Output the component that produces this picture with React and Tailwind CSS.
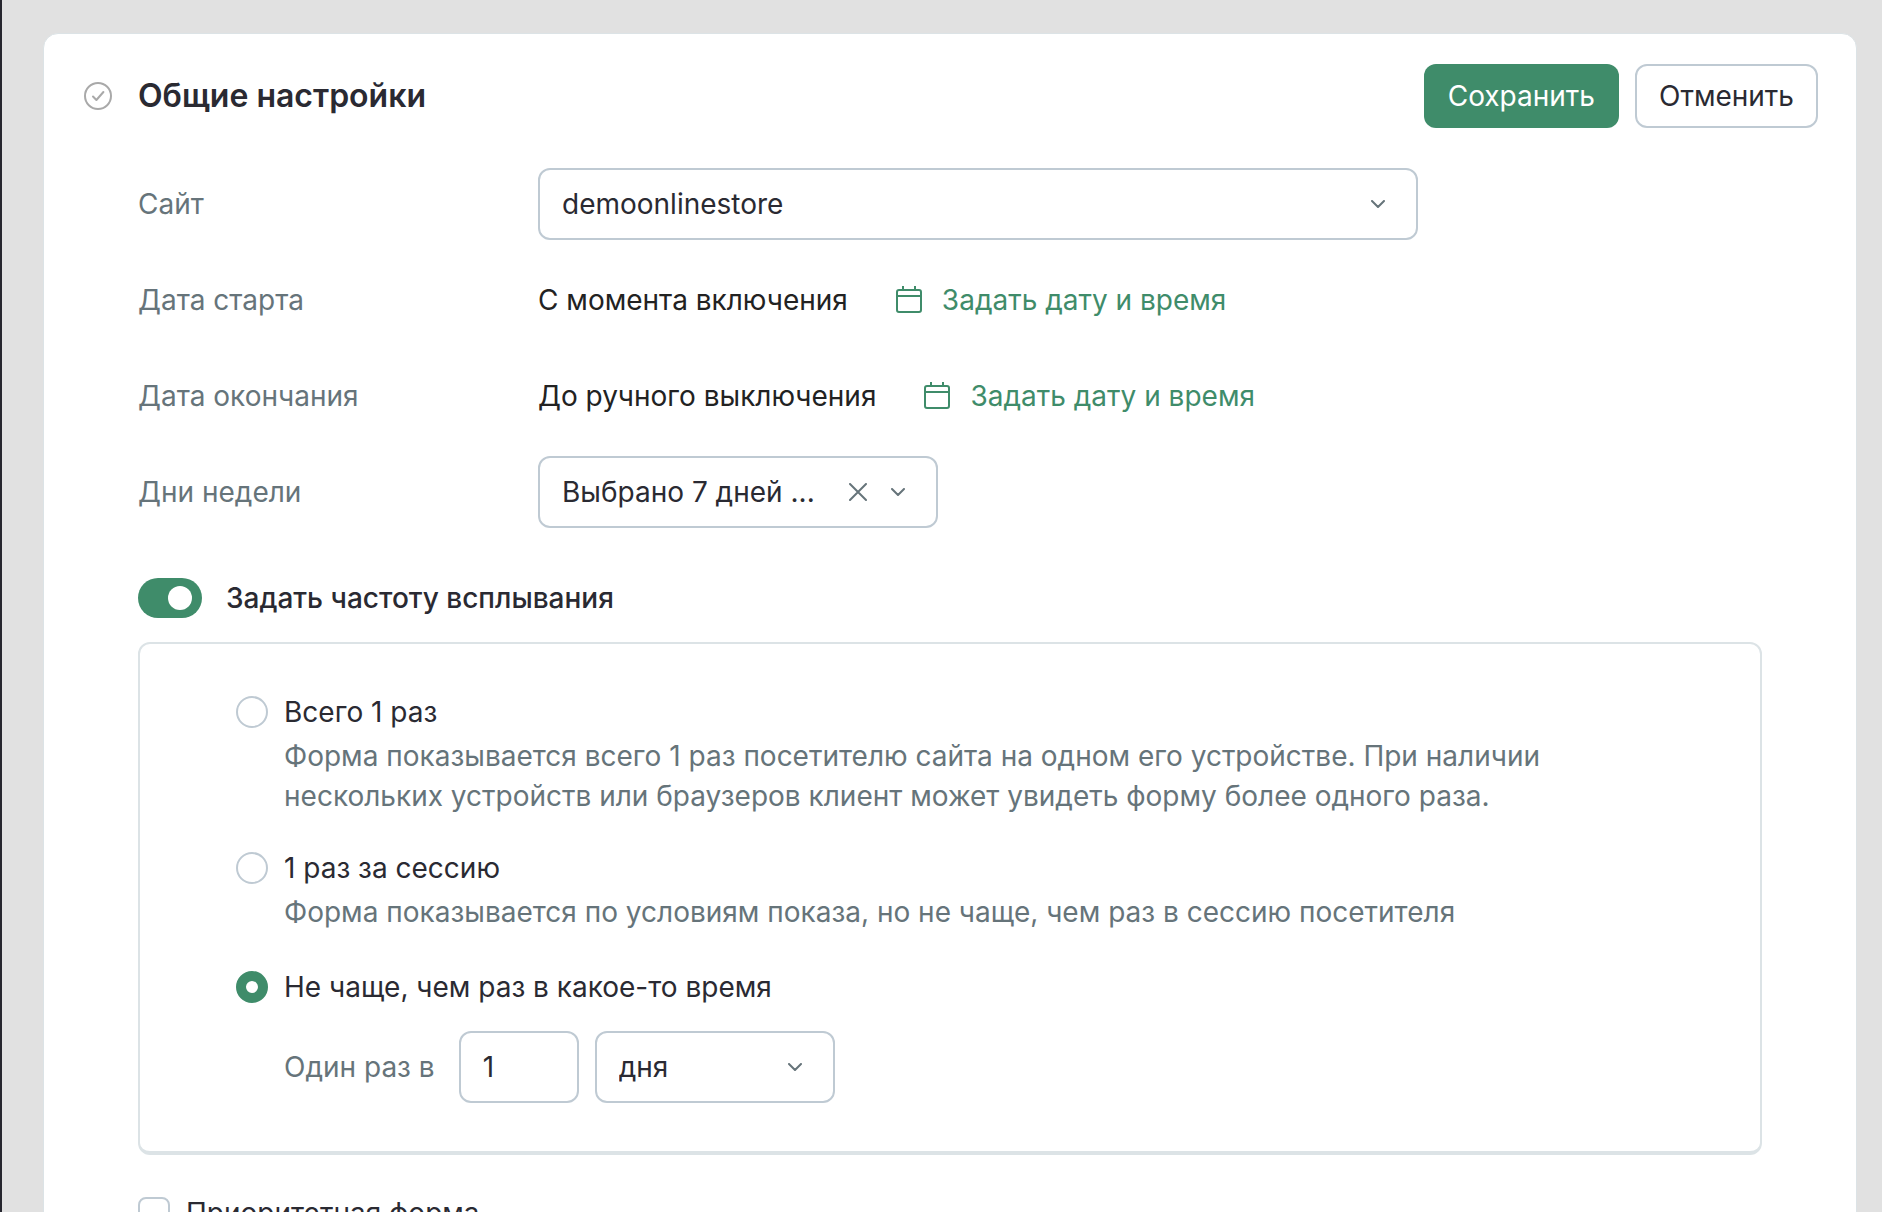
import { useState } from 'react';

const fieldClass =
    'h-[72px] w-full appearance-none rounded-xl border-2 border-[#bfcad3] bg-white px-[22px] text-[28px] leading-10 text-[#2a2a32] outline-none';

const dateRows = [
    { label: 'Дата старта', value: 'С момента включения' },
    { label: 'Дата окончания', value: 'До ручного выключения' },
];

const frequencies = [
    {
        id: 'once',
        title: 'Всего 1 раз',
        text: 'Форма показывается всего 1 раз посетителю сайта на одном его устройстве. При наличии нескольких устройств или браузеров клиент может увидеть форму более одного раза.',
    },
    {
        id: 'session',
        title: '1 раз за сессию',
        text: 'Форма показывается по условиям показа, но не чаще, чем раз в сессию посетителя',
    },
];

function CheckCircle() {
    return (
        <svg className="size-7 shrink-0" viewBox="0 0 28 28" fill="none" stroke="#a9a9a9" strokeWidth="2" aria-hidden="true">
            <circle cx="14" cy="14" r="13" />
            <path d="M9 14.5l3.4 3.5 7-8" strokeLinecap="round" strokeLinejoin="round" />
        </svg>
    );
}

function CalendarIcon() {
    return (
        <svg className="h-7 w-[26px] shrink-0" viewBox="0 0 26 28" fill="none" stroke="currentColor" strokeWidth="2" aria-hidden="true">
            <rect x="1" y="4" width="24" height="22" rx="2" />
            <path d="M1 10h24M7 0v4M19 0v4" />
        </svg>
    );
}

function Chevron() {
    return (
        <svg className="h-2 w-[14px]" viewBox="0 0 14 8" fill="none" stroke="#66747a" strokeWidth="2" aria-hidden="true">
            <path d="M1 1l6 6 6-6" strokeLinecap="round" strokeLinejoin="round" />
        </svg>
    );
}

function Select({ id, children, clearable, ...props }) {
    return (
        <div className="relative w-full">
            <select id={id} className={fieldClass} {...props}>
                {children}
            </select>
            <div className="pointer-events-none absolute inset-y-0 right-[33px] flex items-center gap-6">
                {clearable && (
                    <button type="button" aria-label="Очистить" className="pointer-events-auto">
                        <svg className="size-[18px]" viewBox="0 0 18 18" fill="none" stroke="#66747a" strokeWidth="2" aria-hidden="true">
                            <path d="M1 1l16 16M17 1L1 17" strokeLinecap="round" />
                        </svg>
                    </button>
                )}
                <Chevron />
            </div>
        </div>
    );
}

function Radio({ title, ...props }) {
    return (
        <label className="flex w-fit items-center gap-4">
            <input
                type="radio"
                name="frequency"
                className="size-8 appearance-none rounded-full border-2 border-[#bfcad3] bg-white checked:border-[10px] checked:border-[#3f8c6a]"
                {...props}
            />
            {title}
        </label>
    );
}

export default function App() {
    const [frequency, setFrequency] = useState('interval');
    const [enabled, setEnabled] = useState(true);

    return (
        <div className="h-screen overflow-hidden border-l-2 border-[#26262f] bg-[#e1e1e1] pt-[33px] pr-[25px] pl-[41px] font-['Inter',sans-serif] text-[28px] leading-10 text-[#2a2a32] antialiased">
            <main className="min-h-screen rounded-[15px] border border-[#dce3e6] bg-white pt-[30px] pr-[38px] pb-16 pl-10">
                {/* Header */}
                <header className="flex items-center">
                    <CheckCircle />
                    <h1 className="ml-[26px] flex-1 text-[32px] font-semibold">Общие настройки</h1>
                    <div className="flex gap-4">
                        <button type="button" className="h-16 rounded-xl bg-[#3f8c6a] px-6 text-white">
                            Сохранить
                        </button>
                        <button type="button" className="h-16 rounded-xl border-2 border-[#bfcad3] px-[22px]">
                            Отменить
                        </button>
                    </div>
                </header>

                <div className="mt-10 mr-14 ml-[54px]">
                    {/* Main fields */}
                    <div className="flex flex-col gap-6">
                        <div className="grid h-[72px] grid-cols-[400px_1fr] items-center">
                            <label htmlFor="site" className="text-[#66747a]">Сайт</label>
                            <div className="max-w-[880px]">
                                <Select id="site">
                                    <option>demoonlinestore</option>
                                </Select>
                            </div>
                        </div>

                        {dateRows.map((row) => (
                            <div key={row.label} className="grid h-[72px] grid-cols-[400px_1fr] items-center">
                                <span className="text-[#66747a]">{row.label}</span>
                                <div className="flex items-center text-[#222222]">
                                    {row.value}
                                    <button type="button" className="ml-12 flex items-center gap-5 text-[#3f8c6a]">
                                        <CalendarIcon />
                                        Задать дату и время
                                    </button>
                                </div>
                            </div>
                        ))}

                        <div className="grid h-[72px] grid-cols-[400px_1fr] items-center">
                            <label htmlFor="days" className="text-[#66747a]">Дни недели</label>
                            <div className="max-w-[400px]">
                                <Select id="days" clearable>
                                    <option>Выбрано 7 дней ...</option>
                                </Select>
                            </div>
                        </div>
                    </div>

                    {/* Frequency switch */}
                    <label className="mt-[50px] flex h-10 w-fit items-center gap-6 font-medium">
                        <input
                            type="checkbox"
                            role="switch"
                            checked={enabled}
                            onChange={(e) => setEnabled(e.target.checked)}
                            className="h-10 w-16 appearance-none rounded-full bg-[#bfcad3] p-2 before:block before:size-6 before:rounded-full before:bg-white checked:bg-[#3f8c6a] checked:pl-[30px]"
                        />
                        Задать частоту всплывания
                    </label>

                    <section className="mt-6 rounded-xl border-2 border-b-4 border-[#dce3e6] px-24 py-12">
                        <div className="flex max-w-[1360px] flex-col gap-8">
                            {frequencies.map((item) => (
                                <div key={item.id}>
                                    <Radio
                                        title={item.title}
                                        checked={frequency === item.id}
                                        onChange={() => setFrequency(item.id)}
                                    />
                                    <p className="mt-1 pl-12 text-[#66747a]">{item.text}</p>
                                </div>
                            ))}
                        </div>

                        {/* Custom interval */}
                        <div className="mt-[35px]">
                            <Radio
                                title="Не чаще, чем раз в какое-то время"
                                checked={frequency === 'interval'}
                                onChange={() => setFrequency('interval')}
                            />
                            <div className="mt-6 flex items-center pl-12">
                                <label htmlFor="count" className="text-[#66747a]">Один раз в</label>
                                <div className="ml-6 w-[120px]">
                                    <input id="count" type="text" defaultValue="1" className={fieldClass} />
                                </div>
                                <div className="ml-4 w-60">
                                    <Select id="unit" aria-label="Единица времени">
                                        <option>дня</option>
                                    </Select>
                                </div>
                            </div>
                        </div>
                    </section>

                    <label className="mt-[38px] flex w-fit items-center gap-4">
                        <input type="checkbox" className="size-8 appearance-none rounded-lg border-2 border-[#bfcad3] bg-white checked:bg-[#3f8c6a]" />
                        Приоритетная форма
                    </label>
                </div>
            </main>
        </div>
    );
}
